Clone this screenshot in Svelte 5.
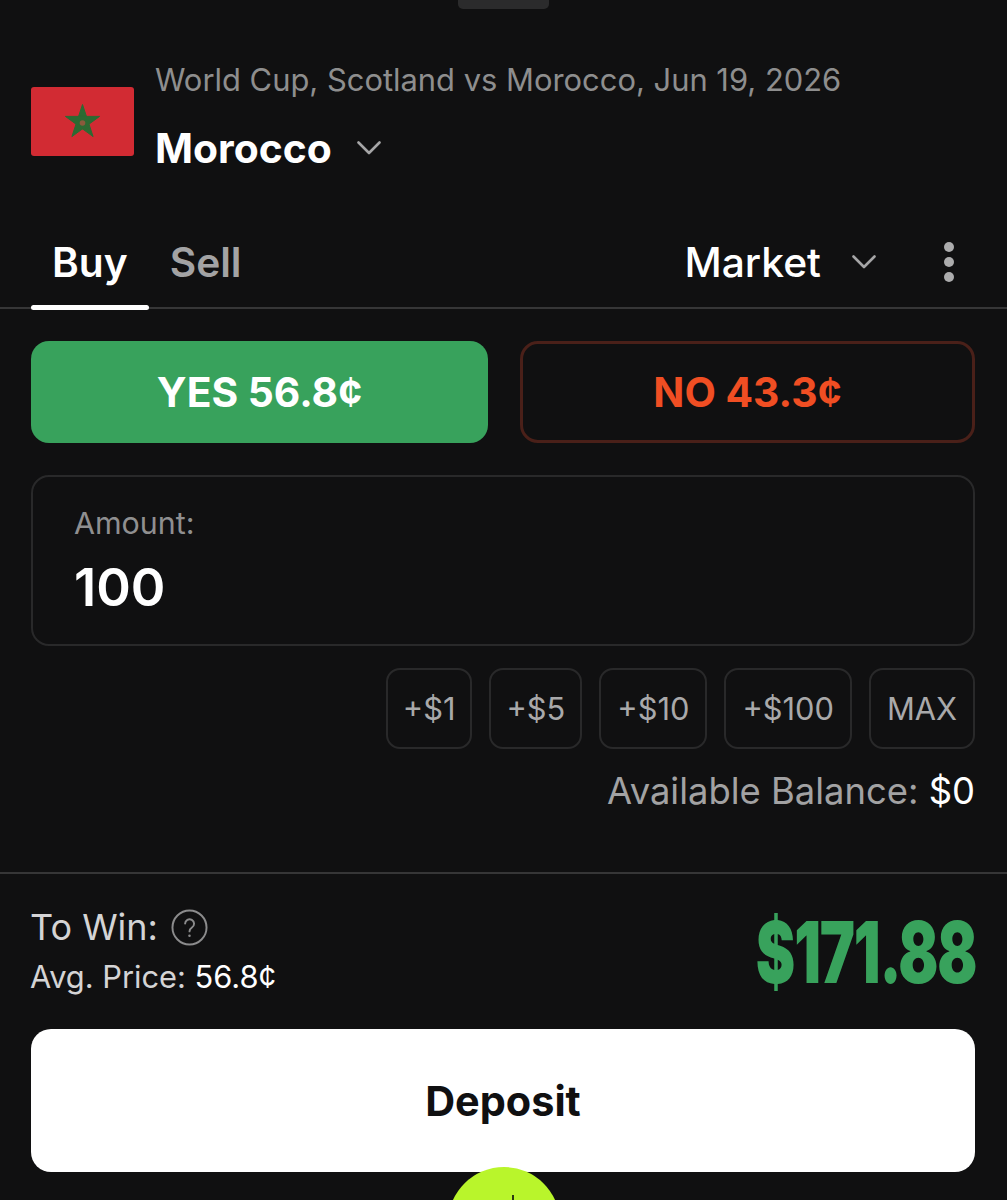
<script>
  const amounts = ['+$1', '+$5', '+$10', '+$100', 'MAX'];
</script>

<div class="sheet">
  <div class="handle"></div>

  <header class="event">
    <svg class="flag" viewBox="0 0 103 69" aria-hidden="true">
      <rect width="103" height="69" rx="3" fill="#d22b33" />
      <path d="M51.500 17.500 62.100 49.600 34.400 29.400H68.600L40.900 49.600Z" fill="#2c6a32" stroke="#2c6a32" stroke-width="1" stroke-linejoin="round" />
      <circle cx="51.500" cy="36" r="2.800" fill="#8a5a3c" />
    </svg>
    <div class="event-text">
      <div class="event-name">World Cup, Scotland vs Morocco, Jun 19, 2026</div>
      <div class="team">
        <span>Morocco</span>
        <svg class="chev" viewBox="0 0 24 14" aria-hidden="true"><path d="M1.500 1.500 12 12 22.500 1.500" /></svg>
      </div>
    </div>
  </header>

  <nav class="tabs">
    <div class="tab active">Buy</div>
    <div class="tab">Sell</div>
    <div class="spacer"></div>
    <div class="market">Market</div>
    <svg class="chev" viewBox="0 0 24 14" aria-hidden="true"><path d="M1.500 1.500 12 12 22.500 1.500" /></svg>
    <div class="dots"><i></i><i></i><i></i></div>
  </nav>

  <section class="body">
    <div class="sides">
      <button class="side yes">YES 56.8¢</button>
      <button class="side no">NO 43.3¢</button>
    </div>

    <div class="amount">
      <div class="amount-label">Amount:</div>
      <div class="amount-value">100</div>
    </div>

    <div class="quick">
      {#each amounts as a}
        <button class="chip">{a}</button>
      {/each}
    </div>

    <div class="balance">Available Balance: <span>$0</span></div>
  </section>

  <footer class="summary">
    <div class="win-row">
      <div class="win-labels">
        <div class="to-win">
          To Win:
          <svg class="help" viewBox="0 0 38 38" aria-hidden="true">
            <circle cx="19" cy="19" r="17.500" />
            <path d="M14.500 15a4.600 4.600 0 1 1 7 4c-1.700 1.100-2.500 2-2.500 4" />
            <circle class="dot" cx="19" cy="27.500" r="1.300" />
          </svg>
        </div>
        <div class="avg">Avg. Price: <span>56.8¢</span></div>
      </div>
      <div class="win-value">$171.88</div>
    </div>
    <button class="deposit">Deposit</button>
  </footer>

  <div class="fab"></div>
</div>

<style>
  :global(body) {
    margin: 0;
    background: #101011;
  }

  .sheet {
    position: relative;
    height: 1200px;
    overflow: hidden;
    background: #101011;
    color: #fff;
    font-family: Inter, "Liberation Sans", sans-serif;
  }

  button {
    font-family: inherit;
    background: none;
    cursor: pointer;
  }

  .handle {
    width: 91px;
    height: 9px;
    margin: 0 auto;
    background: #2b2b2c;
    border-radius: 0 0 5px 5px;
  }

  .event {
    display: flex;
    align-items: center;
    gap: 21px;
    padding: 53px 31px 0;
  }

  .flag {
    width: 103px;
    height: 69px;
    flex: none;
    margin-top: 8px;
  }

  .event-name {
    font-size: 30.900px;
    line-height: 36px;
    color: #8e8e8e;
  }

  .team {
    display: flex;
    align-items: center;
    gap: 25px;
    margin-top: 26px;
    font-size: 40.800px;
    line-height: 48px;
    font-weight: 700;
  }

  .chev {
    width: 24px;
    height: 14px;
    fill: none;
    stroke: #a5a5a6;
    stroke-width: 2.600;
    stroke-linecap: round;
    stroke-linejoin: round;
  }

  .tabs {
    display: flex;
    align-items: center;
    height: 90px;
    margin-top: 45px;
    padding: 0 31px;
    border-bottom: 2px solid #363637;
  }

  .tab {
    position: relative;
    align-self: stretch;
    display: flex;
    align-items: center;
    padding: 0 21px;
    font-size: 40.700px;
    font-weight: 600;
    color: #a3a3a4;
  }

  .tab.active {
    color: #fff;
  }

  .tab.active::after {
    content: "";
    position: absolute;
    left: 0;
    right: 0;
    bottom: -3px;
    height: 5px;
    border-radius: 3px;
    background: #fff;
  }

  .spacer {
    flex: 1;
  }

  .market {
    font-size: 40.800px;
    font-weight: 500;
    margin-right: 31px;
  }

  .dots {
    display: flex;
    flex-direction: column;
    gap: 5px;
    margin-left: 68px;
    margin-right: 22px;
  }

  .dots i {
    width: 10px;
    height: 10px;
    border-radius: 50%;
    background: #acacad;
  }

  .body {
    padding: 32px 32px 0 31px;
  }

  .sides {
    display: flex;
    gap: 32px;
  }

  .side {
    height: 102px;
    border-radius: 18px;
    font-size: 40.800px;
    font-weight: 700;
  }

  .yes {
    width: 457px;
    border: none;
    background: #38a25c;
    color: #fff;
  }

  .no {
    flex: 1;
    border: 3px solid #4a2019;
    background: none;
    color: #f04e23;
  }

  .amount {
    height: 171px;
    box-sizing: border-box;
    margin-top: 32px;
    padding: 28px 41px;
    border: 2px solid #29292a;
    border-radius: 18px;
  }

  .amount-label {
    font-size: 30.400px;
    line-height: 36px;
    color: #8f8f90;
  }

  .amount-value {
    margin-top: 16px;
    font-size: 52.500px;
    line-height: 60px;
    font-weight: 600;
  }

  .quick {
    display: flex;
    justify-content: flex-end;
    gap: 17px;
    margin-top: 22px;
  }

  .chip {
    height: 81px;
    padding: 0 16px;
    border: 2px solid #29292a;
    border-radius: 14px;
    font-size: 30.800px;
    color: #a9a9aa;
  }

  .chip:nth-child(-n + 2) {
    padding: 0 15px;
  }

  .balance {
    margin-top: 22px;
    text-align: right;
    font-size: 36.400px;
    line-height: 40px;
    color: #a2a2a3;
  }

  .balance span {
    color: #fff;
  }

  .summary {
    margin-top: 61px;
    padding: 0 32px 0 31px;
    border-top: 2px solid #363637;
  }

  .win-row {
    display: flex;
    justify-content: space-between;
    align-items: center;
    box-sizing: border-box;
    height: 155px;
    padding-bottom: 2px;
  }

  .win-labels {
    margin-left: -1px;
  }

  .to-win {
    display: flex;
    align-items: center;
    gap: 13px;
    font-size: 36px;
    line-height: 40px;
    color: #d4d4d5;
  }

  .help {
    width: 37px;
    height: 37px;
    fill: none;
    stroke: #8b8b8c;
    stroke-width: 2;
    stroke-linecap: round;
  }

  .help .dot {
    fill: #8b8b8c;
    stroke: none;
  }

  .avg {
    margin-top: 13px;
    font-size: 30.800px;
    line-height: 34px;
    color: #d4d4d5;
  }

  .avg span {
    color: #fff;
  }

  .win-value {
    margin-top: 4px;
    margin-right: -1px;
    font-size: 85px;
    font-weight: 900;
    letter-spacing: -0.02em;
    color: #38a25c;
    transform: scaleX(0.697);
    transform-origin: right center;
  }

  .deposit {
    display: block;
    width: 100%;
    height: 143px;
    border: none;
    border-radius: 20px;
    background: #fff;
    color: #101011;
    font-size: 41.400px;
    font-weight: 700;
  }

  .fab {
    position: absolute;
    left: 448px;
    top: 1167px;
    width: 112px;
    height: 112px;
    border-radius: 50%;
    background: #b9f52b;
  }

  .fab::after {
    content: "";
    position: absolute;
    left: 64px;
    top: 28px;
    width: 2px;
    height: 6px;
    background: #2b3a10;
  }
</style>
